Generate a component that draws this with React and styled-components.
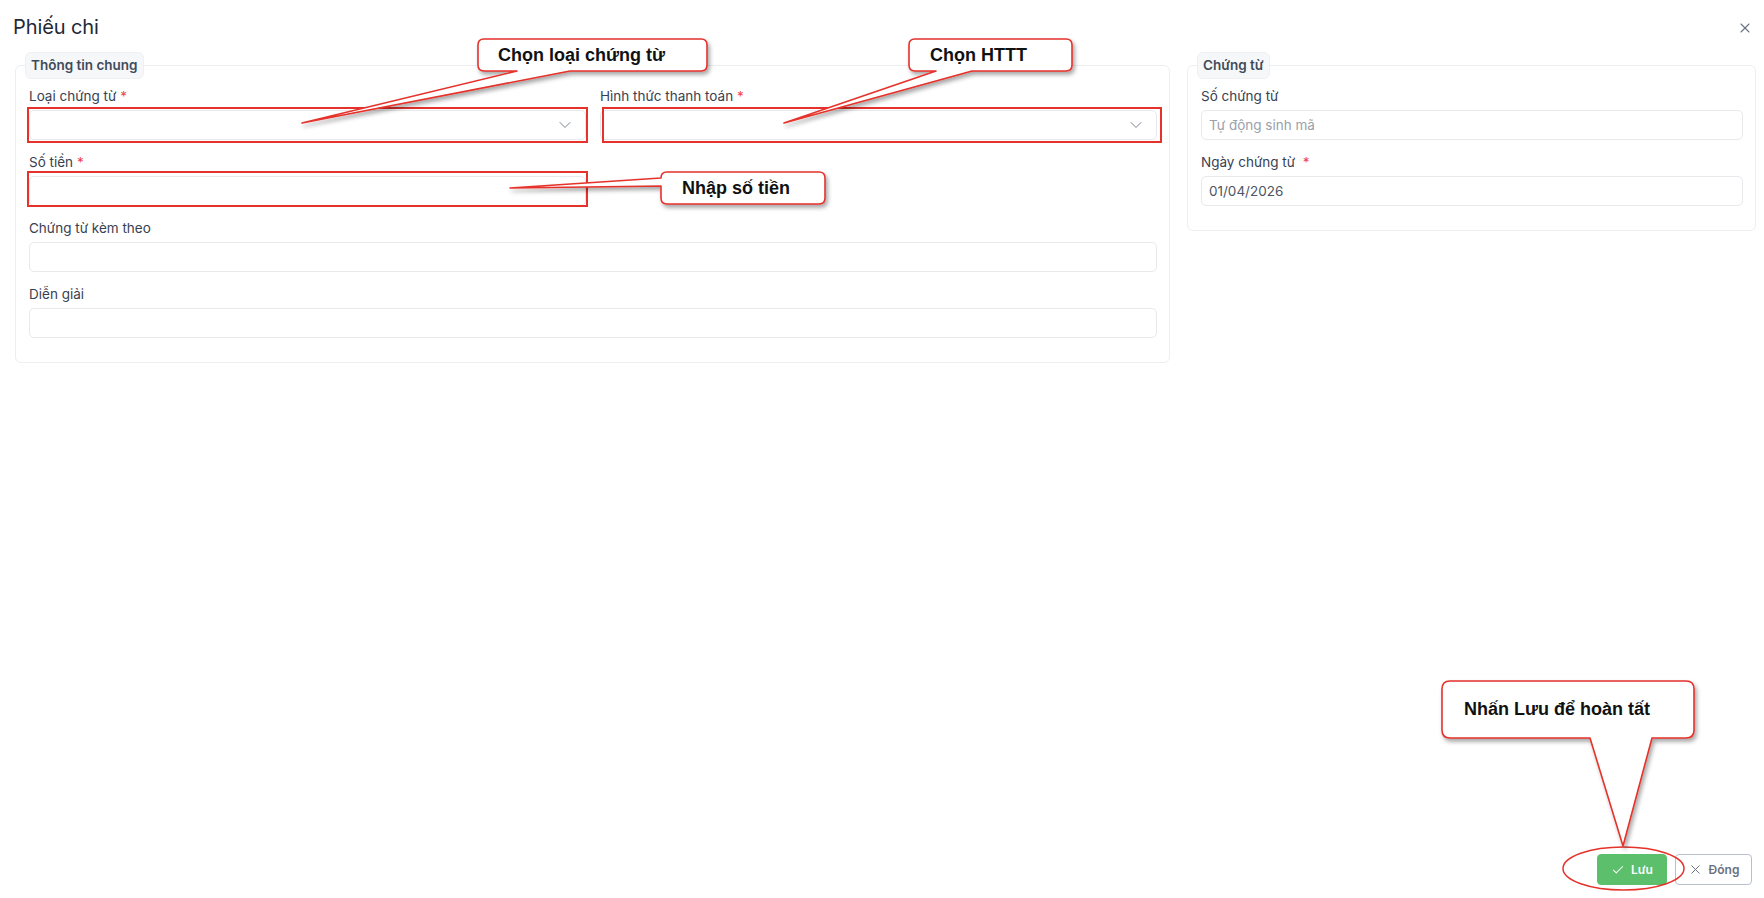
import React from "react";
import styled, { createGlobalStyle } from "styled-components";
import { ChevronDown, X, Check } from "lucide-react";

const Global = createGlobalStyle`
  html, body { margin: 0; padding: 0; background: #ffffff; }
  body { font-family: Inter, "Noto Sans", sans-serif; color: #1f2937; }
  * { box-sizing: border-box; }
`;

const Page = styled.div`
  position: relative;
  width: 100%;
  height: 100vh;
  display: flex;
  flex-direction: column;
  overflow: hidden;
`;

const Header = styled.div`
  display: flex;
  align-items: center;
  justify-content: space-between;
  padding: 13px 11px 0 13px;
  height: 41px;
`;

const Title = styled.h1`
  margin: 0;
  font-size: 20px;
  line-height: 28px;
  font-weight: 400;
  letter-spacing: -0.1px;
  color: #1f2937;
`;

const CloseBtn = styled.button`
  border: 0;
  background: none;
  padding: 0;
  width: 16px;
  height: 16px;
  display: flex;
  align-items: center;
  justify-content: center;
  color: #6b7280;
  margin-top: 2px;
`;

const Body = styled.div`
  display: grid;
  grid-template-columns: 1155px 1fr;
  column-gap: 17px;
  align-items: start;
  padding: 11px 8px 0 15px;
`;

const Fieldset = styled.fieldset`
  margin: 0;
  min-width: 0;
  border: 1px solid #eceef1;
  border-radius: 6px;
  padding: 8px 12px 24px 13px;
`;

const Legend = styled.legend`
  margin-left: -4px;
  padding: 4px 5px;
  border: 1px solid #eef0f3;
  border-radius: 6px;
  background: #f6f7f9;
  font-size: 13.5px;
  line-height: 17px;
  font-weight: 600;
  color: #3f4b5b;
`;

const FieldGrid = styled.div`
  display: grid;
  grid-template-columns: ${(p) => (p.$cols === 2 ? "1fr 1fr" : "1fr")};
  gap: 13px 14px;
`;

const Field = styled.div`
  display: flex;
  flex-direction: column;
  gap: 5px;
  grid-column: ${(p) => (p.$full ? "1 / -1" : "auto")};
`;

const Label = styled.label`
  font-size: 13.5px;
  line-height: 18px;
  color: #374151;
  white-space: pre;
`;

const Req = styled.span`
  color: #ef4444;
`;

const Input = styled.div`
  height: 30px;
  border: 1px solid #e7e9ec;
  border-radius: 5px;
  background: #ffffff;
  display: flex;
  align-items: center;
  justify-content: space-between;
  padding: 0 10px 0 7px;
  font-size: 13.5px;
  color: ${(p) => (p.$placeholder ? "#9aa1ab" : "#4b5563")};
`;

const Spacer = styled.div`
  flex: 1;
`;

const Footer = styled.div`
  display: flex;
  justify-content: flex-end;
  gap: 8px;
  padding: 0 12px 13px 0;
`;

const Button = styled.button`
  height: 31px;
  display: inline-flex;
  align-items: center;
  justify-content: center;
  gap: 6px;
  border-radius: 4px;
  font-family: Inter, "Noto Sans", sans-serif;
  font-size: 12px;
  font-weight: 600;
  padding: 0;
  width: ${(p) => p.$w}px;
  background: ${(p) => (p.$primary ? "#5cbf6b" : "#ffffff")};
  color: ${(p) => (p.$primary ? "#ffffff" : "#6b7280")};
  border: 1px solid ${(p) => (p.$primary ? "#5cbf6b" : "#b9c0cb")};
`;

const Overlay = styled.div`
  position: absolute;
  inset: 0;
  pointer-events: none;
`;

const OverlaySvg = styled.svg`
  position: absolute;
  left: 0;
  top: 0;
`;

const CalloutText = styled.div`
  position: absolute;
  left: ${(p) => p.$x}px;
  top: ${(p) => p.$y}px;
  width: ${(p) => p.$w}px;
  height: ${(p) => p.$h}px;
  line-height: ${(p) => p.$h}px;
  padding-left: ${(p) => p.$pad}px;
  font-family: "Liberation Sans", Arial, sans-serif;
  font-weight: 700;
  font-size: 18px;
  color: #111111;
  white-space: nowrap;
`;

const RED = "#e5322b";

function calloutBottom(x0, y0, x1, y1, r, a, b, tx, ty) {
  return `M${x0 + r},${y0} H${x1 - r} Q${x1},${y0} ${x1},${y0 + r} V${y1 - r} Q${x1},${y1} ${x1 - r},${y1} H${b} L${tx},${ty} L${a},${y1} H${x0 + r} Q${x0},${y1} ${x0},${y1 - r} V${y0 + r} Q${x0},${y0} ${x0 + r},${y0} Z`;
}

function calloutLeft(x0, y0, x1, y1, r, a, b, tx, ty) {
  return `M${x0 + r},${y0} H${x1 - r} Q${x1},${y0} ${x1},${y0 + r} V${y1 - r} Q${x1},${y1} ${x1 - r},${y1} H${x0 + r} Q${x0},${y1} ${x0},${y1 - r} V${b} L${tx},${ty} L${x0},${a} V${y0 + r} Q${x0},${y0} ${x0 + r},${y0} Z`;
}

const callouts = [
  { text: "Chọn loại chứng từ", box: [478, 39, 707, 71], d: calloutBottom(478, 39, 707, 71, 6, 517, 570, 302, 123), pad: 20 },
  { text: "Chọn HTTT", box: [909, 39, 1072, 71], d: calloutBottom(909, 39, 1072, 71, 6, 936, 972, 784, 123), pad: 21 },
  { text: "Nhập số tiền", box: [661, 172, 825, 204], d: calloutLeft(661, 172, 825, 204, 6, 178, 186, 510, 188), pad: 21 },
  { text: "Nhấn Lưu để hoàn tất", box: [1442, 681, 1694, 738], d: calloutBottom(1442, 681, 1694, 738, 8, 1590, 1652, 1623, 846), pad: 22 },
];

const redRects = [
  [28, 108, 559, 34],
  [603, 108, 558, 34],
  [28, 172, 559, 34],
];

function Annotations() {
  return (
    <Overlay>
      <OverlaySvg width="1764" height="898" viewBox="0 0 1764 898">
        <defs>
          <filter id="sh" x="-20%" y="-20%" width="140%" height="160%">
            <feDropShadow dx="2" dy="3" stdDeviation="2" floodColor="#000" floodOpacity="0.35" />
          </filter>
        </defs>
        {redRects.map(([x, y, w, h], i) => (
          <rect key={i} x={x} y={y} width={w} height={h} fill="none" stroke={RED} strokeWidth="2" />
        ))}
        <ellipse cx="1623.5" cy="868.5" rx="60.5" ry="21.5" fill="none" stroke={RED} strokeWidth="1.5" />
        {callouts.map((c, i) => (
          <path key={i} d={c.d} fill="#ffffff" stroke={RED} strokeWidth="1.6" strokeLinejoin="round" filter="url(#sh)" />
        ))}
      </OverlaySvg>
      {callouts.map((c, i) => (
        <CalloutText
          key={i}
          $x={c.box[0]}
          $y={c.box[1]}
          $w={c.box[2] - c.box[0]}
          $h={c.box[3] - c.box[1]}
          $pad={c.pad}
        >
          {c.text}
        </CalloutText>
      ))}
    </Overlay>
  );
}

function Select() {
  return (
    <Input>
      <span />
      <ChevronDown size={20} strokeWidth={1.2} color="#7d8590" />
    </Input>
  );
}

export default function App() {
  return (
    <>
      <Global />
      <Page>
        <Header>
          <Title>Phiếu chi</Title>
          <CloseBtn aria-label="close">
            <X size={16} strokeWidth={1.6} />
          </CloseBtn>
        </Header>
        <Body>
          <Fieldset>
            <Legend>Thông tin chung</Legend>
            <FieldGrid $cols={2}>
              <Field>
                <Label>Loại chứng từ <Req>*</Req></Label>
                <Select />
              </Field>
              <Field>
                <Label>Hình thức thanh toán <Req>*</Req></Label>
                <Select />
              </Field>
              <Field>
                <Label>Số tiền <Req>*</Req></Label>
                <Input />
              </Field>
              <div />
              <Field $full>
                <Label>Chứng từ kèm theo</Label>
                <Input />
              </Field>
              <Field $full>
                <Label>Diễn giải</Label>
                <Input />
              </Field>
            </FieldGrid>
          </Fieldset>
          <Fieldset>
            <Legend>Chứng từ</Legend>
            <FieldGrid $cols={1}>
              <Field>
                <Label>Số chứng từ</Label>
                <Input $placeholder>Tự động sinh mã</Input>
              </Field>
              <Field>
                <Label>Ngày chứng từ  <Req>*</Req></Label>
                <Input>01/04/2026</Input>
              </Field>
            </FieldGrid>
          </Fieldset>
        </Body>
        <Spacer />
        <Footer>
          <Button $primary $w={70}>
            <Check size={14} strokeWidth={1.8} />
            Lưu
          </Button>
          <Button $w={77}>
            <X size={15} strokeWidth={1.6} />
            Đóng
          </Button>
        </Footer>
        <Annotations />
      </Page>
    </>
  );
}
